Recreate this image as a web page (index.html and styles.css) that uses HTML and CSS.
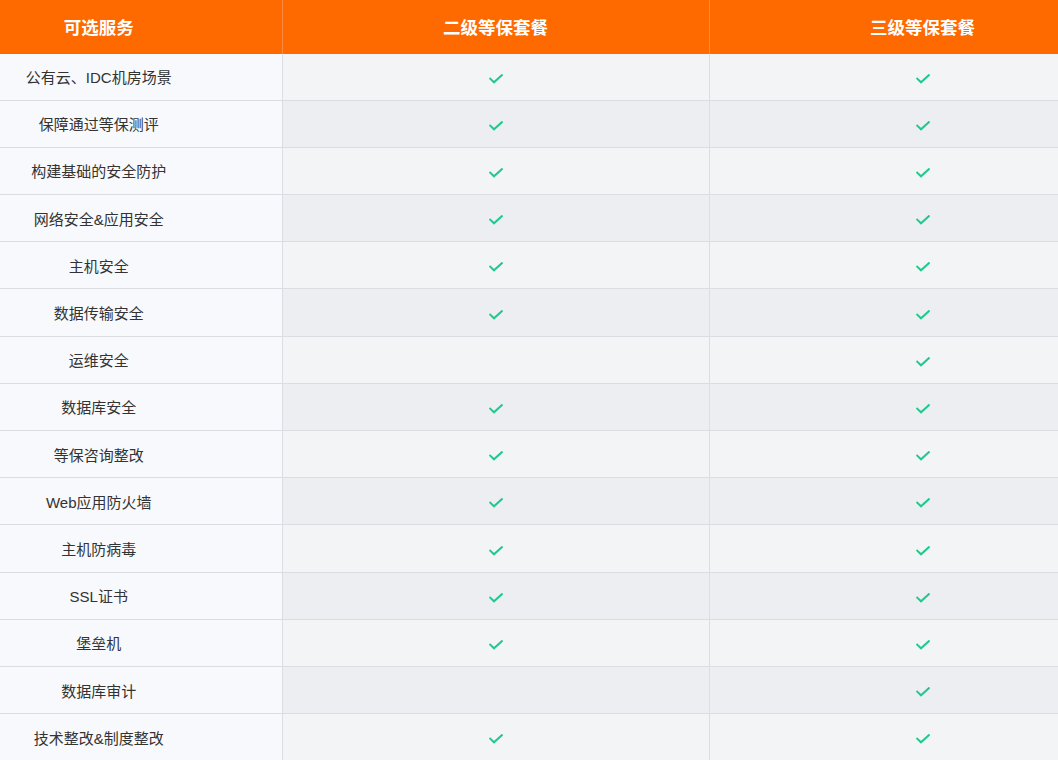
FILE: index.html
```html
<!DOCTYPE html>
<html lang="zh">
<head>
<meta charset="utf-8">
<title>等保套餐</title>
<link rel="stylesheet" href="styles.css">
</head>
<body>
<div class="frame">
<table class="plans">
  <colgroup><col class="c-name"><col class="c-plan"><col class="c-plan"></colgroup>
  <thead>
    <tr><th class="name">可选服务</th><th>二级等保套餐</th><th>三级等保套餐</th></tr>
  </thead>
  <tbody id="rows"></tbody>
</table>
</div>
<script src="app.js"></script>
</body>
</html>
```
FILE: app.js
```js
const rows = [
  ["公有云、IDC机房场景", 1, 1],
  ["保障通过等保测评", 1, 1],
  ["构建基础的安全防护", 1, 1],
  ["网络安全&应用安全", 1, 1],
  ["主机安全", 1, 1],
  ["数据传输安全", 1, 1],
  ["运维安全", 0, 1],
  ["数据库安全", 1, 1],
  ["等保咨询整改", 1, 1],
  ["Web应用防火墙", 1, 1],
  ["主机防病毒", 1, 1],
  ["SSL证书", 1, 1],
  ["堡垒机", 1, 1],
  ["数据库审计", 0, 1],
  ["技术整改&制度整改", 1, 1]
];
const check = '<svg class="check" width="14" height="10" viewBox="0 0 14 10"><polyline points="1.2,4.6 5,8.3 12.8,1.2" fill="none" stroke="#1ec98b" stroke-width="2" stroke-linecap="square"/></svg>';
const body = document.getElementById("rows");
body.innerHTML = rows.map(r =>
  `<tr><td class="name">${r[0]}</td><td>${r[1] ? check : ""}</td><td>${r[2] ? check : ""}</td></tr>`
).join("");
```
FILE: styles.css
```css
html, body {
  margin: 0;
  padding: 0;
  overflow: hidden;
  background: #ffffff;
}
body {
  font-family: "Liberation Sans", "Noto Sans CJK SC", sans-serif;
  color: #333333;
}
.frame {
  width: 100%;
  overflow: hidden;
}
.plans {
  border-collapse: collapse;
  table-layout: fixed;
  width: 1136px;
}
.c-name { width: 282px; }
.c-plan { width: 427px; }
.plans th {
  height: 53.5px;
  padding: 0;
  background: #ff6a00;
  color: #ffffff;
  font-size: 17.5px;
  font-weight: bold;
  text-align: center;
  border-right: 1px solid #ff8a3d;
}
.plans th.name {
  padding-right: 84px;
}
.plans td {
  height: 46.2px;
  padding: 0;
  text-align: center;
  vertical-align: middle;
  font-size: 15px;
  border-right: 1px solid #dcdde2;
  border-bottom: 1px solid #dcdde2;
  background: #f3f4f5;
}
.plans tbody tr:nth-child(even) td {
  background: #edeef2;
}
.plans td.name,
.plans tbody tr:nth-child(even) td.name {
  background: #f8f9fc;
  padding-right: 84px;
}
.check {
  display: inline-block;
  vertical-align: middle;
  margin-top: 1px;
}
```
